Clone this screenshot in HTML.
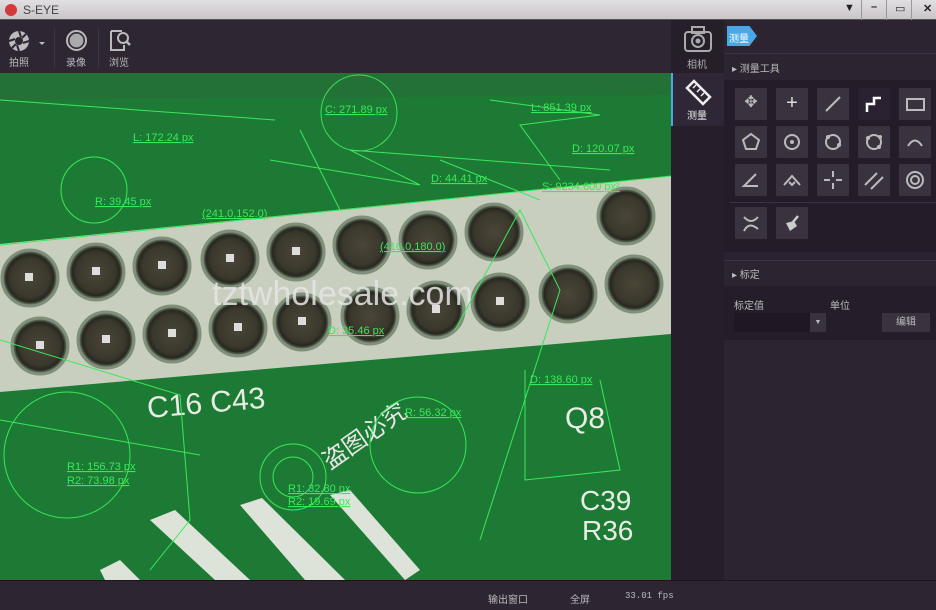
<!DOCTYPE html><html><head><meta charset="utf-8"><style>
*{margin:0;padding:0;box-sizing:border-box}
body{width:936px;height:610px;overflow:hidden;background:#2b2330;font-family:"Liberation Sans","Noto Sans CJK SC",sans-serif;position:relative;color:#ccc}
.abs{position:absolute}
#title{left:0;top:0;width:936px;height:20px;background:linear-gradient(#e2dfe2,#c9c5c9);border-bottom:1px solid #555}
#tb{left:0;top:20px;width:671px;height:53px;background:#2f2634}
.tl{font-size:10px;color:#bbb}
#side{left:671px;top:20px;width:53px;height:560px;background:#261f2a}
#panel{left:724px;top:20px;width:212px;height:560px;background:#2c2431}
.btn{position:absolute;width:32px;height:32px;background:#3b3240;border-radius:1px}
#status{left:0;top:580px;width:936px;height:30px;background:#2e2533;border-top:1px solid #1a141c}
.st{font-size:10px;color:#bbb;top:10px}
</style></head><body>
<div id="title" class="abs">
<div class="abs" style="left:5px;top:4px;width:12px;height:12px;border-radius:50%;background:#d43a3a"></div>
<div class="abs" style="left:23px;top:3px;font-size:12px;color:#444">S-EYE</div>
<div class="abs" style="left:837px;top:0;width:99px;height:20px;font-size:11px;color:#222">
<span class="abs" style="left:7px;top:2px">▼</span><span class="abs" style="left:34px;top:1px;font-weight:bold">–</span><span class="abs" style="left:58px;top:2px">▭</span><span class="abs" style="left:86px;top:2px;font-weight:bold">✕</span>
<div class="abs" style="left:24px;top:0;width:1px;height:20px;background:#999"></div><div class="abs" style="left:49px;top:0;width:1px;height:20px;background:#999"></div><div class="abs" style="left:74px;top:0;width:1px;height:20px;background:#999"></div></div>
</div>
<div id="tb" class="abs">
<svg class="abs" style="left:8px;top:10px" width="40" height="24"><circle cx="11" cy="11" r="10" fill="#bbb"/><circle cx="11" cy="11" r="4" fill="#2f2634"/><path d="M11 1 L13 7 M21 11 L15 13 M11 21 L9 15 M1 11 L7 9 M18 4 L14 8 M4 18 L8 14" stroke="#2f2634" stroke-width="2"/><path d="M31 12 l3 3 l3-3z" fill="#bbb"/></svg>
<div class="abs tl" style="left:9px;top:34px">拍照</div>
<div class="abs" style="left:54px;top:8px;width:1px;height:40px;background:#3e3543"></div>
<div class="abs" style="left:66px;top:10px;width:21px;height:21px;border-radius:50%;border:2px solid #bbb;background:radial-gradient(#aaa 55%,transparent 60%)"></div>
<div class="abs tl" style="left:66px;top:34px">录像</div>
<div class="abs" style="left:98px;top:8px;width:1px;height:40px;background:#3e3543"></div>
<svg class="abs" style="left:108px;top:9px" width="24" height="24"><path d="M3 2 H14 M3 2 V21 H16 V16" stroke="#bbb" stroke-width="2" fill="none"/><circle cx="15" cy="9" r="5" stroke="#bbb" stroke-width="2" fill="none"/><path d="M18 12 L22 16" stroke="#bbb" stroke-width="2.5"/></svg>
<div class="abs tl" style="left:109px;top:34px">浏览</div>
</div>
<svg class="abs" style="left:0;top:73px" width="671" height="507" viewBox="0 73 671 507">
<defs><radialGradient id="p"><stop offset="0" stop-color="#4a4638"/><stop offset="0.7" stop-color="#3a372c"/><stop offset="0.85" stop-color="#26281f"/><stop offset="1" stop-color="#8a9a84"/></radialGradient></defs>
<rect x="0" y="73" width="671" height="507" fill="#1d7a34"/>
<path d="M0 73 L671 73 L671 95 L0 100Z" fill="#2a6b3a" opacity=".6"/>
<polygon points="0,244 671,176 671,334 0,392" fill="#c9cfbf"/>
<g fill="url(#p)" stroke="#7f8f7a" stroke-width="3">
<circle cx="30" cy="278" r="28"/><circle cx="96" cy="272" r="28"/><circle cx="162" cy="266" r="28"/><circle cx="230" cy="259" r="28"/><circle cx="296" cy="252" r="28"/><circle cx="362" cy="245" r="28"/><circle cx="428" cy="240" r="28"/><circle cx="494" cy="232" r="28"/><circle cx="626" cy="216" r="28"/>
<circle cx="40" cy="346" r="28"/><circle cx="106" cy="340" r="28"/><circle cx="172" cy="334" r="28"/><circle cx="238" cy="328" r="28"/><circle cx="302" cy="322" r="28"/><circle cx="370" cy="316" r="28"/><circle cx="436" cy="310" r="28"/><circle cx="500" cy="302" r="28"/><circle cx="568" cy="294" r="28"/><circle cx="634" cy="284" r="28"/>
</g>
<g fill="#ddd"><rect x="25" y="273" width="8" height="8"/><rect x="92" y="267" width="8" height="8"/><rect x="158" y="261" width="8" height="8"/><rect x="226" y="254" width="8" height="8"/><rect x="292" y="247" width="8" height="8"/><rect x="36" y="341" width="8" height="8"/><rect x="102" y="335" width="8" height="8"/><rect x="168" y="329" width="8" height="8"/><rect x="234" y="323" width="8" height="8"/><rect x="298" y="317" width="8" height="8"/><rect x="432" y="305" width="8" height="8"/><rect x="496" y="297" width="8" height="8"/></g>
<g fill="#dde3d8"><path d="M150 520 L175 510 L250 580 L215 580Z"/><path d="M240 505 L262 498 L345 580 L305 580Z"/><path d="M330 495 L350 490 L420 570 L405 580Z"/><path d="M100 570 L120 560 L140 580 L105 580Z"/></g>
<g fill="#e8ece4" font-family="Liberation Sans" font-size="30"><text x="148" y="418" transform="rotate(-5 148 418)">C16 C43</text><text x="565" y="428">Q8</text><text x="580" y="510" font-size="28">C39</text><text x="582" y="540" font-size="28">R36</text></g>
<text x="212" y="305" font-size="34" fill="#e6e6e6" opacity=".85" font-family="Liberation Sans">tztwholesale.com</text>
<text x="330" y="470" font-size="24" fill="#e8e8e8" transform="rotate(-35 330 470)" font-family="Noto Sans CJK SC">盗图必究</text>
<g stroke="#39e85a" stroke-width="1" fill="none">
<circle cx="359" cy="113" r="38"/><circle cx="94" cy="190" r="33"/><circle cx="67" cy="455" r="63"/><circle cx="418" cy="445" r="48"/><circle cx="293" cy="477" r="33"/><circle cx="293" cy="477" r="20"/>
<path d="M0 100 L275 120 M270 160 L420 185 L350 150 L610 170 M490 100 L600 115 L520 125 L560 180 M0 245 L671 176 M455 330 L520 210 L560 290 L480 540 M525 370 L525 480 L620 470 L600 380 M0 340 L180 395 L190 520 L150 570 M0 420 L200 455 M300 130 L340 210 M440 160 L540 200"/>
</g>
<g fill="#39e85a" font-size="11" font-family="Liberation Sans" text-decoration="underline">
<text x="325" y="113">C: 271.89 px</text><text x="531" y="111">L: 851.39 px</text><text x="133" y="141">L: 172.24 px</text><text x="572" y="152">D: 120.07 px</text><text x="431" y="182">D: 44.41 px</text><text x="542" y="190">S: 9234.600 px²</text><text x="95" y="205">R: 39.45 px</text><text x="202" y="217">(241.0,152.0)</text><text x="380" y="250">(416.0,180.0)</text><text x="328" y="334">D: 35.46 px</text><text x="530" y="383">D: 138.60 px</text><text x="405" y="416">R: 56.32 px</text><text x="67" y="470">R1: 156.73 px</text><text x="67" y="484">R2: 73.98 px</text><text x="288" y="492">R1: 32.80 px</text><text x="288" y="505">R2: 19.69 px</text>
</g>
</svg>
<div id="side" class="abs">
<svg class="abs" style="left:13px;top:6px" width="28" height="26"><rect x="1" y="6" width="26" height="19" rx="3" stroke="#aaa" stroke-width="2" fill="none"/><rect x="8" y="1" width="12" height="6" stroke="#aaa" stroke-width="2" fill="none"/><circle cx="14" cy="15" r="6" stroke="#aaa" stroke-width="2" fill="none"/><circle cx="14" cy="15" r="2.5" fill="#aaa"/></svg>
<div class="abs" style="left:16px;top:36px;font-size:10px;color:#aaa">相机</div>
<div class="abs" style="left:0;top:53px;width:53px;height:53px;background:#2f2735;border-left:2px solid #4aa8e8"></div>
<svg class="abs" style="left:13px;top:58px" width="28" height="28"><path d="M3 10 L10 3 L26 19 L19 26Z" stroke="#eee" stroke-width="2.5" fill="none"/><path d="M9 10 l3-3 M13 14 l3-3 M17 18 l3-3" stroke="#eee" stroke-width="1.5"/></svg>
<div class="abs" style="left:16px;top:87px;font-size:10px;color:#eee">测量</div>
</div>
<div id="panel" class="abs">
<div class="abs" style="left:3px;top:6px;width:30px;height:20px;background:#4aa8e8;clip-path:polygon(0 0,75% 0,100% 50%,75% 100%,0 100%);font-size:10px;color:#fff;padding:4px 0 0 2px">测量</div>
<div class="abs" style="left:0;top:33px;width:212px;height:1px;background:#3a3240"></div>
<div class="abs" style="left:8px;top:40px;font-size:10px;color:#bbb">▸ 测量工具</div>
<div class="abs" style="left:0;top:60px;width:212px;height:172px;background:#241c28"></div>
<div class="btn" style="left:11px;top:68px;color:#bbb;font-size:16px;text-align:center;line-height:30px">✥</div>
<div class="btn" style="left:52px;top:68px;color:#ddd;font-size:20px;text-align:center;line-height:30px">+</div>
<div class="btn" style="left:93px;top:68px"><svg width="32" height="32"><path d="M9 23 L23 9" stroke="#bbb" stroke-width="2"/></svg></div>
<div class="btn" style="left:134px;top:68px;background:#2a2230"><svg width="32" height="32"><path d="M9 24 V16 H16 V10 H23" stroke="#fff" stroke-width="2.5" fill="none"/></svg></div>
<div class="btn" style="left:175px;top:68px"><svg width="32" height="32"><rect x="8" y="11" width="17" height="11" stroke="#bbb" stroke-width="2" fill="none"/></svg></div>
<div class="btn" style="left:11px;top:106px"><svg width="32" height="32"><path d="M16 8 L24 14 L21 23 L11 23 L8 14Z" stroke="#bbb" stroke-width="2" fill="none"/></svg></div>
<div class="btn" style="left:52px;top:106px"><svg width="32" height="32"><circle cx="16" cy="16" r="7" stroke="#bbb" stroke-width="2" fill="none"/><circle cx="16" cy="16" r="2" fill="#bbb"/></svg></div>
<div class="btn" style="left:93px;top:106px"><svg width="32" height="32"><circle cx="16" cy="16" r="7" stroke="#bbb" stroke-width="2" fill="none"/><circle cx="11" cy="11" r="2" fill="#bbb"/><circle cx="22" cy="19" r="2" fill="#bbb"/></svg></div>
<div class="btn" style="left:134px;top:106px"><svg width="32" height="32"><circle cx="16" cy="16" r="7" stroke="#bbb" stroke-width="2" fill="none"/><circle cx="10" cy="12" r="2" fill="#bbb"/><circle cx="22" cy="11" r="2" fill="#bbb"/><circle cx="21" cy="21" r="2" fill="#bbb"/></svg></div>
<div class="btn" style="left:175px;top:106px"><svg width="32" height="32"><path d="M9 20 Q16 9 23 20" stroke="#bbb" stroke-width="2" fill="none"/></svg></div>
<div class="btn" style="left:11px;top:144px"><svg width="32" height="32"><path d="M21 10 L9 22 H23" stroke="#bbb" stroke-width="2" fill="none"/></svg></div>
<div class="btn" style="left:52px;top:144px"><svg width="32" height="32"><path d="M8 21 L16 12 L24 21 M13 18 L16 21 L19 18" stroke="#bbb" stroke-width="2" fill="none"/></svg></div>
<div class="btn" style="left:93px;top:144px"><svg width="32" height="32"><path d="M7 16 H13 M19 16 H25 M16 7 V13 M16 19 V25" stroke="#bbb" stroke-width="2"/></svg></div>
<div class="btn" style="left:134px;top:144px"><svg width="32" height="32"><path d="M7 21 L19 9 M13 25 L25 13" stroke="#bbb" stroke-width="2"/></svg></div>
<div class="btn" style="left:175px;top:144px"><svg width="32" height="32"><circle cx="16" cy="16" r="8" stroke="#bbb" stroke-width="2" fill="none"/><circle cx="16" cy="16" r="4" stroke="#bbb" stroke-width="2" fill="none"/></svg></div>
<div class="abs" style="left:6px;top:182px;width:206px;height:1px;background:#3a3240"></div>
<div class="btn" style="left:11px;top:187px"><svg width="32" height="32"><path d="M9 10 Q16 18 23 10 M9 24 Q14 14 23 22" stroke="#bbb" stroke-width="2" fill="none"/></svg></div>
<div class="btn" style="left:52px;top:187px"><svg width="32" height="32"><path d="M22 9 L17 15" stroke="#ccc" stroke-width="2.5"/><path d="M10 16 L18 14 L21 19 L14 24Z" fill="#ccc"/></svg></div>
<div class="abs" style="left:0;top:232px;width:212px;height:8px;background:#2a2230"></div>
<div class="abs" style="left:0;top:240px;width:212px;height:1px;background:#3a3240"></div>
<div class="abs" style="left:8px;top:246px;font-size:10px;color:#bbb">▸ 标定</div>
<div class="abs" style="left:0;top:266px;width:212px;height:54px;background:#251e2a"></div>
<div class="abs" style="left:10px;top:277px;font-size:10px;color:#bbb">标定值</div>
<div class="abs" style="left:106px;top:277px;font-size:10px;color:#bbb">单位</div>
<div class="abs" style="left:10px;top:293px;width:76px;height:19px;background:#1f1824"></div>
<div class="abs" style="left:86px;top:293px;width:16px;height:19px;background:#3b3240;font-size:7px;color:#bbb;text-align:center;line-height:19px">▼</div>
<div class="abs" style="left:158px;top:293px;width:48px;height:19px;background:#3b3240;font-size:10px;color:#bbb;text-align:center;line-height:19px">编辑</div>
</div>
<div id="status" class="abs">
<div class="abs st" style="left:488px">输出窗口</div>
<div class="abs st" style="left:570px">全屏</div>
<div class="abs st" style="left:625px;font-family:'Liberation Mono',monospace;font-size:9px">33.01 fps</div>
</div>
</body></html>
